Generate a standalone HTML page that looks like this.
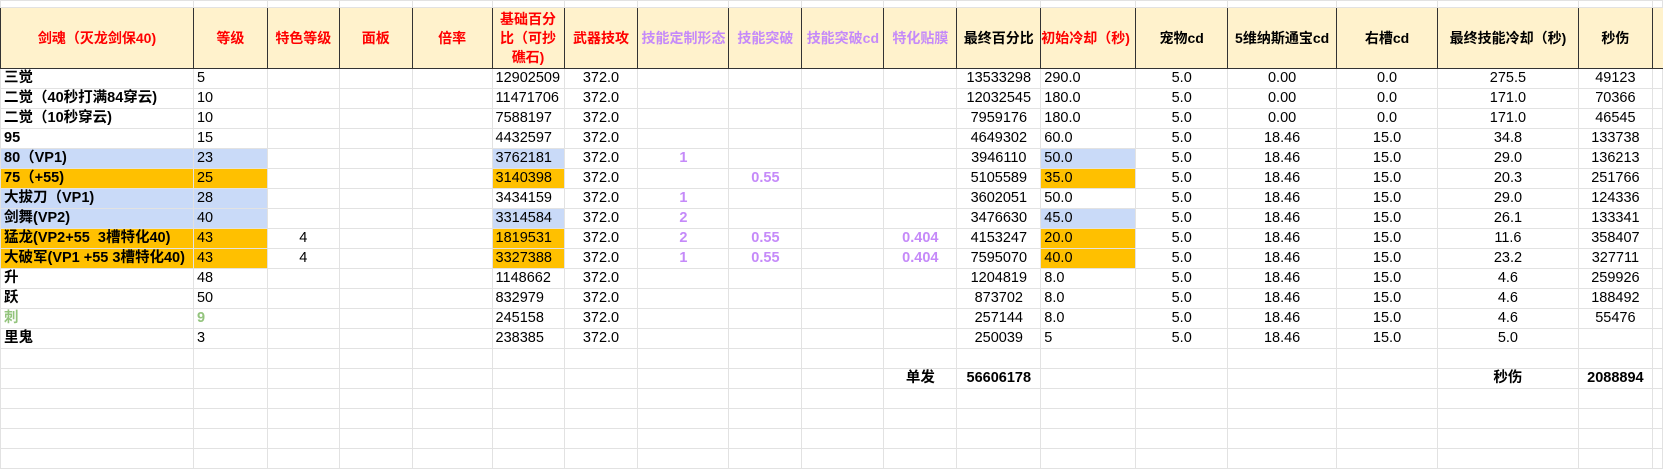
<!DOCTYPE html>
<html><head><meta charset="utf-8"><style>
body{margin:0;background:#fff;width:1663px;height:467px;overflow:hidden;font-family:"Liberation Sans","Noto Sans CJK SC",sans-serif;font-size:14.5px;color:#000}
table{border-collapse:collapse;table-layout:fixed;position:absolute;left:0;top:0}
td{border:1px solid #e2e2e2;height:19px;padding:0 3px;white-space:nowrap;overflow:hidden;line-height:17px}
tr.top td{height:6px;line-height:0}
tr.h td{background:#fff2cc;border:1px solid #333;height:60px;font-weight:bold;text-align:center;white-space:normal;line-height:19px;font-size:14px}
.r{color:#f00}.p{color:#c58af9}
.c{text-align:center}.b{font-weight:bold}
.bl{background:#c9daf8}.or{background:#ffc000}
.pv{color:#c58af9;font-weight:bold;text-align:center}
.g{color:#93c47d;font-weight:bold}
</style></head><body>
<table>
<colgroup>
<col style="width:193px"><col style="width:74px"><col style="width:72px"><col style="width:73px"><col style="width:80px"><col style="width:72px"><col style="width:74px"><col style="width:91px"><col style="width:73px"><col style="width:82px"><col style="width:73px"><col style="width:84px"><col style="width:95px"><col style="width:92px"><col style="width:109px"><col style="width:101px"><col style="width:141px"><col style="width:74px"><col style="width:10px">
</colgroup>
<tr class="top"><td></td><td></td><td></td><td></td><td></td><td></td><td></td><td></td><td></td><td></td><td></td><td></td><td></td><td></td><td></td><td></td><td></td><td></td><td></td></tr>
<tr class="h"><td class="r">剑魂（灭龙剑保40)</td><td class="r">等级</td><td class="r">特色等级</td><td class="r">面板</td><td class="r">倍率</td><td class="r">基础百分比（可抄礁石)</td><td class="r">武器技攻</td><td class="p" style="white-space:nowrap">技能定制形态</td><td class="p">技能突破</td><td class="p" style="white-space:nowrap">技能突破cd</td><td class="p">特化贴膜</td><td style="white-space:nowrap">最终百分比</td><td class="r" style="white-space:nowrap;text-align:left;padding:0">初始冷却（秒)</td><td>宠物cd</td><td style="white-space:nowrap">5维纳斯通宝cd</td><td>右槽cd</td><td style="white-space:nowrap">最终技能冷却（秒)</td><td>秒伤</td><td style="border-right:none"></td></tr>
<tr><td class="b">三觉</td><td>5</td><td></td><td></td><td></td><td>12902509</td><td class="c">372.0</td><td></td><td></td><td></td><td></td><td class="c">13533298</td><td>290.0</td><td class="c">5.0</td><td class="c">0.00</td><td class="c">0.0</td><td class="c">275.5</td><td class="c">49123</td><td></td></tr>
<tr><td class="b">二觉（40秒打满84穿云)</td><td>10</td><td></td><td></td><td></td><td>11471706</td><td class="c">372.0</td><td></td><td></td><td></td><td></td><td class="c">12032545</td><td>180.0</td><td class="c">5.0</td><td class="c">0.00</td><td class="c">0.0</td><td class="c">171.0</td><td class="c">70366</td><td></td></tr>
<tr><td class="b">二觉（10秒穿云)</td><td>10</td><td></td><td></td><td></td><td>7588197</td><td class="c">372.0</td><td></td><td></td><td></td><td></td><td class="c">7959176</td><td>180.0</td><td class="c">5.0</td><td class="c">0.00</td><td class="c">0.0</td><td class="c">171.0</td><td class="c">46545</td><td></td></tr>
<tr><td class="b">95</td><td>15</td><td></td><td></td><td></td><td>4432597</td><td class="c">372.0</td><td></td><td></td><td></td><td></td><td class="c">4649302</td><td>60.0</td><td class="c">5.0</td><td class="c">18.46</td><td class="c">15.0</td><td class="c">34.8</td><td class="c">133738</td><td></td></tr>
<tr><td class="b bl">80（VP1)</td><td class="bl">23</td><td></td><td></td><td></td><td class="bl">3762181</td><td class="c">372.0</td><td class="pv">1</td><td></td><td></td><td></td><td class="c">3946110</td><td class="bl">50.0</td><td class="c">5.0</td><td class="c">18.46</td><td class="c">15.0</td><td class="c">29.0</td><td class="c">136213</td><td></td></tr>
<tr><td class="b or">75（+55)</td><td class="or">25</td><td></td><td></td><td></td><td class="or">3140398</td><td class="c">372.0</td><td></td><td class="pv">0.55</td><td></td><td></td><td class="c">5105589</td><td class="or">35.0</td><td class="c">5.0</td><td class="c">18.46</td><td class="c">15.0</td><td class="c">20.3</td><td class="c">251766</td><td></td></tr>
<tr><td class="b bl">大拔刀（VP1)</td><td class="bl">28</td><td></td><td></td><td></td><td>3434159</td><td class="c">372.0</td><td class="pv">1</td><td></td><td></td><td></td><td class="c">3602051</td><td>50.0</td><td class="c">5.0</td><td class="c">18.46</td><td class="c">15.0</td><td class="c">29.0</td><td class="c">124336</td><td></td></tr>
<tr><td class="b bl">剑舞(VP2)</td><td class="bl">40</td><td></td><td></td><td></td><td class="bl">3314584</td><td class="c">372.0</td><td class="pv">2</td><td></td><td></td><td></td><td class="c">3476630</td><td class="bl">45.0</td><td class="c">5.0</td><td class="c">18.46</td><td class="c">15.0</td><td class="c">26.1</td><td class="c">133341</td><td></td></tr>
<tr><td class="b or">猛龙(VP2+55&nbsp; 3槽特化40)</td><td class="or">43</td><td class="c">4</td><td></td><td></td><td class="or">1819531</td><td class="c">372.0</td><td class="pv">2</td><td class="pv">0.55</td><td></td><td class="pv">0.404</td><td class="c">4153247</td><td class="or">20.0</td><td class="c">5.0</td><td class="c">18.46</td><td class="c">15.0</td><td class="c">11.6</td><td class="c">358407</td><td></td></tr>
<tr><td class="b or">大破军(VP1 +55 3槽特化40)</td><td class="or">43</td><td class="c">4</td><td></td><td></td><td class="or">3327388</td><td class="c">372.0</td><td class="pv">1</td><td class="pv">0.55</td><td></td><td class="pv">0.404</td><td class="c">7595070</td><td class="or">40.0</td><td class="c">5.0</td><td class="c">18.46</td><td class="c">15.0</td><td class="c">23.2</td><td class="c">327711</td><td></td></tr>
<tr><td class="b">升</td><td>48</td><td></td><td></td><td></td><td>1148662</td><td class="c">372.0</td><td></td><td></td><td></td><td></td><td class="c">1204819</td><td>8.0</td><td class="c">5.0</td><td class="c">18.46</td><td class="c">15.0</td><td class="c">4.6</td><td class="c">259926</td><td></td></tr>
<tr><td class="b">跃</td><td>50</td><td></td><td></td><td></td><td>832979</td><td class="c">372.0</td><td></td><td></td><td></td><td></td><td class="c">873702</td><td>8.0</td><td class="c">5.0</td><td class="c">18.46</td><td class="c">15.0</td><td class="c">4.6</td><td class="c">188492</td><td></td></tr>
<tr><td class="g">刺</td><td class="g">9</td><td></td><td></td><td></td><td>245158</td><td class="c">372.0</td><td></td><td></td><td></td><td></td><td class="c">257144</td><td>8.0</td><td class="c">5.0</td><td class="c">18.46</td><td class="c">15.0</td><td class="c">4.6</td><td class="c">55476</td><td></td></tr>
<tr><td class="b">里鬼</td><td>3</td><td></td><td></td><td></td><td>238385</td><td class="c">372.0</td><td></td><td></td><td></td><td></td><td class="c">250039</td><td>5</td><td class="c">5.0</td><td class="c">18.46</td><td class="c">15.0</td><td class="c">5.0</td><td></td><td></td></tr>
<tr><td></td><td></td><td></td><td></td><td></td><td></td><td></td><td></td><td></td><td></td><td></td><td></td><td></td><td></td><td></td><td></td><td></td><td></td><td></td></tr>
<tr><td></td><td></td><td></td><td></td><td></td><td></td><td></td><td></td><td></td><td></td><td class="c b">单发</td><td class="c b">56606178</td><td></td><td></td><td></td><td></td><td class="c b">秒伤</td><td class="c b">2088894</td><td></td></tr>
<tr><td></td><td></td><td></td><td></td><td></td><td></td><td></td><td></td><td></td><td></td><td></td><td></td><td></td><td></td><td></td><td></td><td></td><td></td><td></td></tr>
<tr><td></td><td></td><td></td><td></td><td></td><td></td><td></td><td></td><td></td><td></td><td></td><td></td><td></td><td></td><td></td><td></td><td></td><td></td><td></td></tr>
<tr><td></td><td></td><td></td><td></td><td></td><td></td><td></td><td></td><td></td><td></td><td></td><td></td><td></td><td></td><td></td><td></td><td></td><td></td><td></td></tr>
<tr><td></td><td></td><td></td><td></td><td></td><td></td><td></td><td></td><td></td><td></td><td></td><td></td><td></td><td></td><td></td><td></td><td></td><td></td><td></td></tr>
</table>
</body></html>
